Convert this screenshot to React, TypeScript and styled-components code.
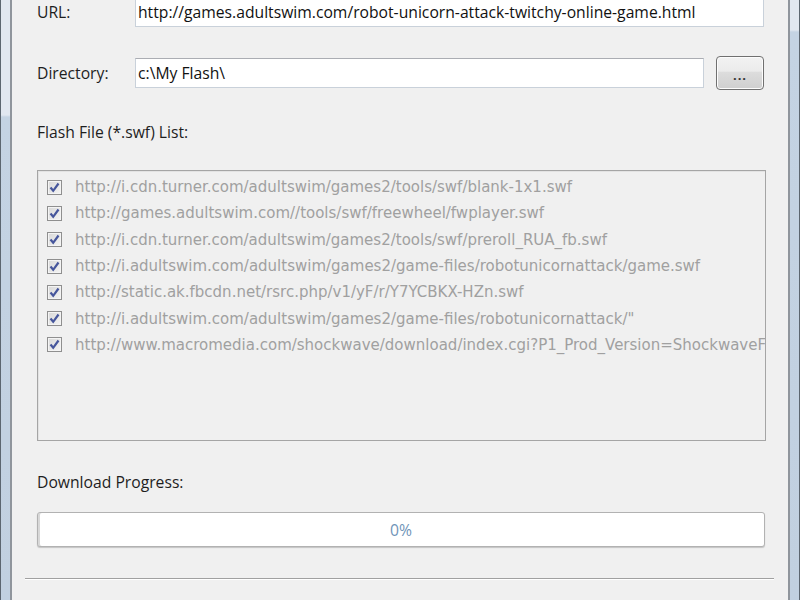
import styled, { createGlobalStyle } from 'styled-components';

const GlobalStyle = createGlobalStyle`
  html, body {
    margin: 0;
    padding: 0;
    background: #f0f0f0;
    overflow: hidden;
  }
`;

const swfFiles = [
  'http://i.cdn.turner.com/adultswim/games2/tools/swf/blank-1x1.swf',
  'http://games.adultswim.com//tools/swf/freewheel/fwplayer.swf',
  'http://i.cdn.turner.com/adultswim/games2/tools/swf/preroll_RUA_fb.swf',
  'http://i.adultswim.com/adultswim/games2/game-files/robotunicornattack/game.swf',
  'http://static.ak.fbcdn.net/rsrc.php/v1/yF/r/Y7YCBKX-HZn.swf',
  'http://i.adultswim.com/adultswim/games2/game-files/robotunicornattack/"',
  'http://www.macromedia.com/shockwave/download/index.cgi?P1_Prod_Version=ShockwaveFlash',
];

const CheckMark = () => (
  <svg width="11" height="11" viewBox="0 0 11 11">
    <path d="M1.5 5.5 L4.2 8.8 L9.5 1.5" fill="none" stroke="#46569c" strokeWidth="2.2" />
  </svg>
);

const App = () => {
  return (
    <>
      <GlobalStyle />
      <Window>
        <Frame $side="left" />
        <Content>
          <FieldRow>
            <Label>URL:</Label>
            <TextInput>
              http://games.adultswim.com/robot-unicorn-attack-twitchy-online-game.html
            </TextInput>
          </FieldRow>
          <DirectoryRow>
            <Label>Directory:</Label>
            <TextInput>c:\My Flash\</TextInput>
            <BrowseButton>...</BrowseButton>
          </DirectoryRow>
          <SectionLabel>Flash File (*.swf) List:</SectionLabel>
          <ListBox>
            {swfFiles.map((url, index) => (
              <ListItem key={index}>
                <CheckBox>
                  <CheckMark />
                </CheckBox>
                <ItemText>{url}</ItemText>
              </ListItem>
            ))}
          </ListBox>
          <ProgressLabel>Download Progress:</ProgressLabel>
          <ProgressBar>
            <ProgressText>0%</ProgressText>
          </ProgressBar>
          <Separator />
        </Content>
        <Frame $side="right" />
      </Window>
    </>
  );
};

export default App;

const Window = styled.div`
  display: flex;
  width: 800px;
  height: 600px;
  overflow: hidden;
`;

const Frame = styled.div<{ $side: 'left' | 'right' }>`
  width: 9px;
  flex-shrink: 0;
  background: linear-gradient(
    to bottom,
    #e1e7f0 0,
    #e1e7f0 ${({ $side }) => ($side === 'left' ? '115px' : '30px')},
    #c4d3e3 ${({ $side }) => ($side === 'left' ? '117px' : '32px')},
    #c1d0e0 100%
  );
  ${({ $side }) =>
    $side === 'left'
      ? 'border-left: 1px solid #5c6670; border-right: 2px solid #8f959c;'
      : 'border-left: 2px solid #8f959c; border-right: 1px solid #5c6670;'}
`;

const Content = styled.div`
  flex: 1;
  min-width: 0;
  display: flex;
  flex-direction: column;
  padding: 0 11px 0 13px;
  margin-top: -3px;
  background: #f0f0f0;
  font-family: 'Open Sans', 'Noto Sans', sans-serif;
  font-size: 15.7px;
  color: #1e1e1e;
`;

const FieldRow = styled.div`
  display: flex;
  align-items: center;
  height: 30px;
  padding-left: 12px;
  padding-right: 13px;
`;

const DirectoryRow = styled(FieldRow)`
  margin-top: 29px;
  height: 34px;
`;

const Label = styled.div`
  width: 98px;
  flex-shrink: 0;
  white-space: nowrap;
`;

const TextInput = styled.div`
  flex: 1;
  min-width: 0;
  height: 30px;
  box-sizing: border-box;
  display: flex;
  align-items: center;
  padding-left: 2px;
  background: #ffffff;
  border: 1px solid #c9d1da;
  border-top-color: #abadb3;
  color: #111;
  white-space: nowrap;
  overflow: hidden;
`;

const BrowseButton = styled.div`
  width: 48px;
  height: 34px;
  margin-left: 12px;
  box-sizing: border-box;
  flex-shrink: 0;
  display: flex;
  align-items: center;
  justify-content: center;
  padding-top: 4px;
  border: 1px solid #707070;
  border-radius: 4px;
  background: linear-gradient(to bottom, #f2f2f2 0%, #ebebeb 45%, #dddddd 46%, #cfcfcf 100%);
  box-shadow: inset 0 0 0 1px #fcfcfc;
  font-size: 13px;
  font-weight: 700;
  letter-spacing: 1px;
  color: #333;
`;

const SectionLabel = styled.div`
  margin-top: 32px;
  padding-left: 12px;
  height: 20px;
  line-height: 20px;
  white-space: nowrap;
`;

const ListBox = styled.div`
  margin: 28px 11px 0 12px;
  height: 271px;
  box-sizing: border-box;
  border: 1px solid #a5a5a5;
  box-shadow: inset 1px 1px 0 #e3e3e3;
  padding: 3px 0 0 9px;
  overflow: hidden;
`;

const ListItem = styled.div`
  display: flex;
  align-items: center;
  height: 26.3px;
  gap: 13px;
`;

const CheckBox = styled.div`
  width: 15px;
  height: 15px;
  box-sizing: border-box;
  flex-shrink: 0;
  display: flex;
  align-items: center;
  justify-content: center;
  border: 1px solid #8f8f8f;
  background: linear-gradient(135deg, #d8d8d8 0%, #f4f4f4 100%);
  box-shadow: inset 0 0 0 1px #f4f4f4;
`;

const ItemText = styled.div`
  font-family: 'DejaVu Sans', 'Liberation Sans', sans-serif;
  font-size: 15px;
  color: #a0a0a0;
  white-space: nowrap;
`;

const ProgressLabel = styled(SectionLabel)`
  margin-top: 31px;
`;

const ProgressBar = styled.div`
  margin: 20px 12px 0 12px;
  height: 35px;
  box-sizing: border-box;
  display: flex;
  align-items: center;
  justify-content: center;
  background: #ffffff;
  border: 1px solid #b2b2b2;
  border-radius: 3px;
  box-shadow: inset 2px 0 0 #d8d8d8, 0 1px 1px #c4c4c4;
`;

const ProgressText = styled.span`
  color: #6f94b8;
`;

const Separator = styled.div`
  margin: 31px 3px 0 0;
  height: 1px;
  background: #a0a0a0;
  border-bottom: 1px solid #ffffff;
`;
